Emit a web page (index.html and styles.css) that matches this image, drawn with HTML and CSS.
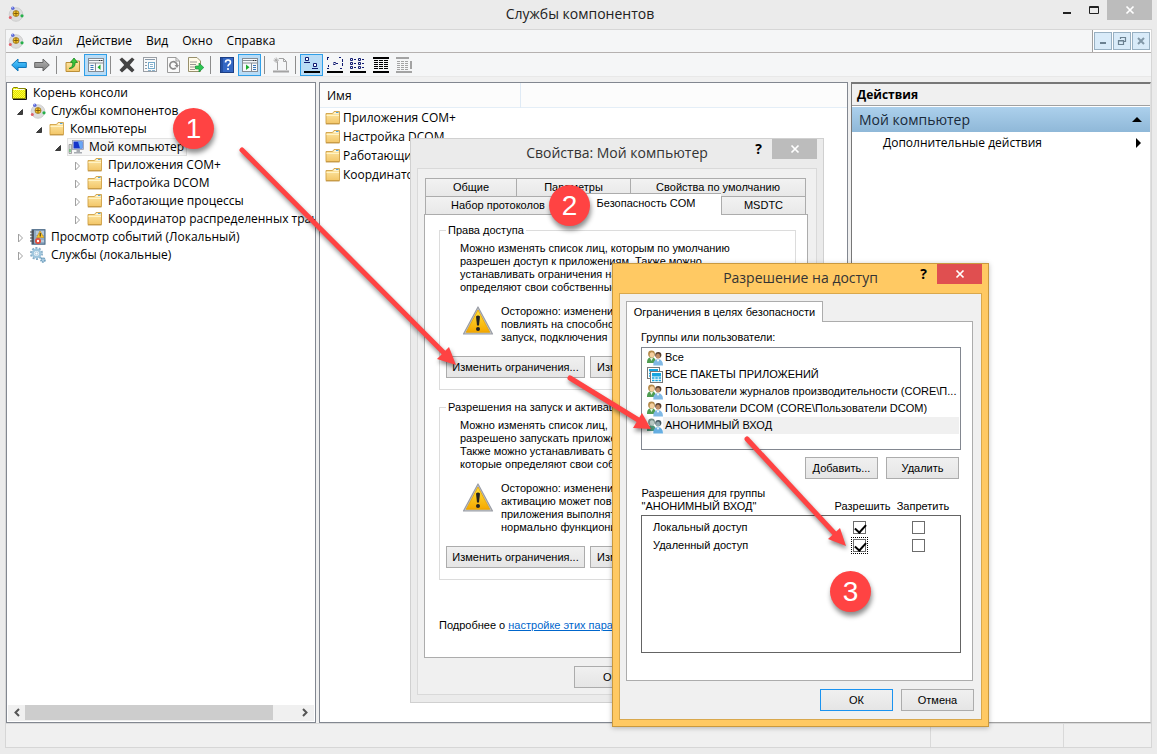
FILE: index.html
```html
<!DOCTYPE html>
<html lang="ru">
<head>
<meta charset="utf-8">
<title>Службы компонентов</title>
<link rel="stylesheet" href="styles.css">
</head>
<body>
<svg class="sprite" aria-hidden="true">
  <defs>
    <linearGradient id="gFolder" x1="0" y1="0" x2="0" y2="1"><stop offset="0" stop-color="#fde9a9"/><stop offset="1" stop-color="#f3c668"/></linearGradient>
    <linearGradient id="gWarn" x1="0" y1="0" x2="0" y2="1"><stop offset="0" stop-color="#ffe23c"/><stop offset="1" stop-color="#f5a800"/></linearGradient>
    <linearGradient id="gBlue" x1="0" y1="0" x2="0" y2="1"><stop offset="0" stop-color="#5fd0ff"/><stop offset="1" stop-color="#0a8be0"/></linearGradient>
    <linearGradient id="gGray" x1="0" y1="0" x2="0" y2="1"><stop offset="0" stop-color="#b5b5b5"/><stop offset="1" stop-color="#7c7c7c"/></linearGradient>
    <pattern id="dither" width="2" height="2" patternUnits="userSpaceOnUse"><rect width="2" height="2" fill="#ffff38"/><rect width="1" height="1" fill="#e2e200"/><rect x="1" y="1" width="1" height="1" fill="#e2e200"/></pattern>
  </defs>
  <symbol id="com" viewBox="0 0 16 16">
    <circle cx="8" cy="8.5" r="6.8" fill="#dcdcdc" stroke="#c8c8c8" stroke-width=".8"/>
    <circle cx="8" cy="7.500" r="3" fill="#f6c62c" stroke="#8a6410" stroke-width=".7"/>
    <path d="M8 5V10M5.500 7.500H10.500" stroke="#6e4a00" stroke-width=".8"/>
    <circle cx="4.800" cy="2.200" r="1.700" fill="#5a68d8"/><circle cx="4.400" cy="1.700" r=".6" fill="#b7c0ff"/>
    <circle cx="14" cy="9.800" r="1.600" fill="#24b04a"/><circle cx="2.300" cy="11.600" r="1.500" fill="#e2606a"/>
  </symbol>
  <symbol id="root" viewBox="0 0 16 16">
    <path d="M.5 13.500V3.500L1.500 2.500H5.500L6.500 3.500H13.500V13.500Z" fill="url(#dither)" stroke="#85850a"/>
    <path d="M14.500 4V14.500H1" fill="none" stroke="#111"/><path d="M1.500 4.500H12.500" stroke="#fffff0"/>
  </symbol>
  <symbol id="folder" viewBox="0 0 16 16">
    <path d="M1 13.500V3.500H7.500L9 1.500H14.500V13.500Z" fill="url(#gFolder)" stroke="#d0a044" stroke-width=".9"/>
    <path d="M9.500 2.500H13.500V3.500H9Z" fill="#fff"/><path d="M11 2.500H13.500" stroke="#58a5d5"/>
    <path d="M1.500 5.500H14" stroke="#fff3c6"/><path d="M.8 14H14.500" stroke="#b98a38" stroke-width=".8"/>
  </symbol>
  <symbol id="pc" viewBox="0 0 16 16">
    <path d="M1 5.500H3.500V14.500H1Z" fill="#d7dcdc" stroke="#888" stroke-width=".7"/><path d="M2 10V13" stroke="#3bbc4b"/>
    <rect x="4.500" y="1.500" width="11" height="9" fill="#dfe3ea" stroke="#8a90a0" stroke-width=".7"/>
    <rect x="5.500" y="2.500" width="9" height="7" fill="#1634c9"/><path d="M10 2.500H14.500V9.500H12Z" fill="#68a8f4"/>
    <path d="M8.500 11H12V13H14V14.500H6V13H8.500Z" fill="#a8acb2"/>
  </symbol>
  <symbol id="events" viewBox="0 0 16 16">
    <rect x="2" y=".7" width="13" height="14.500" fill="#8fabc4" stroke="#41617f"/><path d="M3 1V15" stroke="#505a68" stroke-width="2"/>
    <path d="M0 3H3M0 6H3M0 9H3M0 12H3" stroke="#444"/><path d="M6 3H14M6 5H14M6 8H14M6 12H14" stroke="#f2f7fb" stroke-width=".8"/>
    <path d="M10 2L14 8.500H6.500Z" fill="#ffc928" stroke="#b57a00" stroke-width=".5"/><path d="M10.200 4V7.500" stroke="#222"/>
    <circle cx="8" cy="12" r="3" fill="#e24c3a"/><circle cx="8" cy="12" r="1.200" fill="#fff"/>
  </symbol>
  <symbol id="gears" viewBox="0 0 16 16">
    <circle cx="6.500" cy="6.500" r="5.500" fill="none" stroke="#86adc8" stroke-width="2" stroke-dasharray="2 1.450"/>
    <circle cx="6.500" cy="6.500" r="3.800" fill="#eef7fc" stroke="#9fc6dd" stroke-width="2.400"/><circle cx="6.500" cy="6.500" r="1.500" fill="#fff" stroke="#86adc8" stroke-width=".6"/>
    <circle cx="13" cy="13" r="2" fill="#a9cce2" stroke="#6e9dbc" stroke-width="1.600" stroke-dasharray="1.500 .7"/>
  </symbol>
  <symbol id="open" viewBox="0 0 16 16"><path d="M10.500 6.500V11.500H5.500Z" fill="#404040" stroke="#222" stroke-width=".8"/></symbol>
  <symbol id="shut" viewBox="0 0 16 16"><path d="M6.500 5L10.500 9L6.500 13Z" fill="#fff" stroke="#a0a0a0"/></symbol>
  <symbol id="x" viewBox="0 0 10 10"><path d="M1.500 1.500L8.500 8.500M8.500 1.500L1.500 8.500" stroke="#fff" stroke-width="1.700"/></symbol>
  <symbol id="warn" viewBox="0 0 32 32">
    <path d="M16 2L30.500 29H1.500Z" fill="#c3c6cb" stroke="#9a9da5" stroke-width="1.200" stroke-linejoin="round"/>
    <path d="M16 5L27.800 27.300H4.200Z" fill="url(#gWarn)" stroke="#e9a400" stroke-width=".8"/>
    <path d="M14 11.500Q16 9.500 18 11.500L17 20.500H15Z" fill="#222"/><circle cx="16" cy="24" r="2" fill="#222"/>
  </symbol>
  <symbol id="users" viewBox="0 0 16 16">
    <path d="M0 13Q-.2 7.500 4.500 7Q9 7.500 9 13Z" fill="#4f9d52"/><path d="M3 8L4.500 11L6 8Z" fill="#e8f3e2"/>
    <circle cx="4.500" cy="4" r="3.400" fill="#b58a4a"/><ellipse cx="4.900" cy="5" rx="2.200" ry="2.800" fill="#f4cf9f"/>
    <circle cx="11.300" cy="5" r="3.100" fill="#563d2c"/><ellipse cx="11" cy="6.200" rx="2.100" ry="2.600" fill="#c08c66"/>
    <path d="M6.300 15.500Q6 9.500 11 9Q16 9.500 16 15.500Z" fill="#80b9e5"/><path d="M9.500 9.500L11 12L12.500 9.500Z" fill="#fff"/>
  </symbol>
  <symbol id="anon" viewBox="0 0 16 16">
    <path d="M0 13Q-.2 7.500 4.500 7Q9 7.500 9 13Z" fill="#4f9a7c"/>
    <circle cx="4.500" cy="4" r="3.400" fill="#718b85"/><ellipse cx="4.900" cy="5" rx="2.200" ry="2.800" fill="#bacac5"/>
    <circle cx="11.300" cy="5" r="3.100" fill="#475a62"/><ellipse cx="11" cy="6.200" rx="2.100" ry="2.600" fill="#8fa7ad"/>
    <path d="M6.300 15.500Q6 9.500 11 9Q16 9.500 16 15.500Z" fill="#65aee2"/><path d="M9.500 9.500L11 12L12.500 9.500Z" fill="#e8f5ff"/>
  </symbol>
  <symbol id="packs" viewBox="0 0 16 16">
    <rect x=".5" y=".5" width="12" height="11" fill="#fff" stroke="#777"/><rect x="2" y="2" width="9" height="2.500" fill="#18a5df"/><path d="M2 6.500H4M2 9H4" stroke="#18a5df" stroke-width="1.500"/>
    <rect x="3.500" y="4.500" width="12" height="11" fill="#fff" stroke="#777"/><rect x="5" y="6" width="9" height="3.500" fill="#18a5df"/><path d="M5 11H14M5 13.500H14" stroke="#18a5df" stroke-width="1.500" stroke-dasharray="2.500 .8"/>
  </symbol>
</svg>

<header class="titlebar">
  <svg class="ico"><use href="#com"/></svg>
  <h1>Службы компонентов</h1>
  <div class="winbtns">
    <button aria-label="Свернуть"><svg width="10" height="10"><path d="M1 8H9" stroke="#222" stroke-width="2"/></svg></button>
    <button aria-label="Развернуть"><svg width="10" height="10"><path d="M.5 1.500H9.500V8.500H.5ZM0 2.500H10" fill="none" stroke="#222"/></svg></button>
    <button class="close" aria-label="Закрыть"><svg width="10" height="10"><use href="#x"/></svg></button>
  </div>
</header>

<div class="client">
  <nav class="menubar">
    <svg class="ico"><use href="#com"/></svg>
    <button>Файл</button><button>Действие</button><button>Вид</button><button>Окно</button><button>Справка</button>
    <div class="mdi">
      <button aria-label="Свернуть окно"><svg width="10" height="10"><path d="M2 7H8" stroke="#6b8191" stroke-width="2"/></svg></button>
      <button aria-label="Восстановить окно"><svg width="10" height="10"><path d="M3.500 3V1.500H8.500V5.500H7M3 1.500H9M1.500 4.500H6.500V8.500H1.500ZM1 5H7" fill="none" stroke="#6b8191" stroke-width="1.200"/></svg></button>
      <button aria-label="Закрыть окно"><svg width="10" height="10"><path d="M2 2L8 8M8 2L2 8" stroke="#8298a8" stroke-width="2"/></svg></button>
    </div>
  </nav>

  <div class="toolbar">
    <button aria-label="Назад"><svg class="ico" viewBox="0 0 16 16"><path d="M.7 8L7 2V5.500H15.300V10.500H7V14Z" fill="url(#gBlue)" stroke="#1277b8"/></svg></button>
    <button aria-label="Вперед"><svg class="ico" viewBox="0 0 16 16"><path d="M15.300 8L9 2V5.500H.7V10.500H9V14Z" fill="url(#gGray)" stroke="#666"/></svg></button>
    <i class="sep"></i>
    <button aria-label="Вверх"><svg class="ico" viewBox="0 0 16 16"><path d="M1 14.500V5.500H5L6.500 4H14.500V14.500Z" fill="url(#gFolder)" stroke="#bc9038"/><path d="M4 11.500Q8 10.500 7.800 5.500H5.500L9 1L12.500 5.500H10.200Q10.200 11.500 4 11.500Z" fill="#3cc63c" stroke="#16851d" stroke-width=".8"/></svg></button>
    <button class="on" aria-label="Дерево консоли"><svg class="ico" viewBox="0 0 16 16"><rect x=".5" y="1.500" width="15" height="13" fill="#f6f8fa" stroke="#858c94"/><path d="M1 3.500H15M1 6H15M7.500 6V14" stroke="#858c94"/><path d="M11 3.500H15" stroke="#333" stroke-dasharray="1 1"/><path d="M2.500 8.500H5.500M2.500 10.500H5.500M2.500 12.500H5.500" stroke="#3775b8"/><path d="M12.500 7.500V13L9.500 10.200Z" fill="#19ac2b"/></svg></button>
    <i class="sep"></i>
    <button aria-label="Удалить"><svg class="ico" viewBox="0 0 16 16"><path d="M.5 2.500L3 .5L8 5L13 .5L15.500 2.500L10.800 8L15.500 13L13 15.500L8 11L3 15.500L.5 13L5.200 8Z" fill="#444"/></svg></button>
    <button aria-label="Свойства"><svg class="ico" viewBox="0 0 16 16"><rect x="1.500" y=".5" width="13" height="14" fill="#fafafa" stroke="#9a9fa5"/><path d="M3 2.500H13M3 5.500H5M3 8.500H5M3 11.500H5" stroke="#8798a8"/><rect x="6.500" y="5.500" width="6" height="6" fill="#fff" stroke="#74aacb"/><path d="M8 7.500H11M8 9.500H11M6 13.500H9M10 13.500H13" stroke="#8cb2cc"/></svg></button>
    <button aria-label="Обновить"><svg class="ico" viewBox="0 0 16 16"><path d="M2.500 .5H11L14.500 4V15.500H2.500Z" fill="#fafafa" stroke="#9b9b9b"/><path d="M11 .5V4H14" fill="none" stroke="#9b9b9b"/><path d="M10.800 11A3.600 3.600 0 1 1 12 8.500" fill="none" stroke="#8b8b8b" stroke-width="1.700"/><path d="M9.500 8H14L12 11Z" fill="#8b8b8b"/></svg></button>
    <button aria-label="Экспорт"><svg class="ico" viewBox="0 0 16 16"><path d="M.5 .5H9L12.500 4V14.500H.5Z" fill="#fffbe8" stroke="#98906c"/><path d="M2 5H9M2 7.500H8M2 10H8M2 12.500H7" stroke="#7c7c7c" stroke-width=".8"/><path d="M7.500 9H11V6L15.800 10.500L11 15V12H7.500Z" fill="#2dc653" stroke="#16903a" stroke-width=".7"/></svg></button>
    <i class="sep"></i>
    <button aria-label="Справка"><svg class="ico" viewBox="0 0 16 16"><rect x="1.500" y=".5" width="13" height="15" fill="#3467c4" stroke="#1d3f85"/><path d="M3 1V15" stroke="#163a83"/><path d="M6.500 5.500Q6.500 3 9 3Q11.500 3 11.500 5.300Q11.500 6.700 10 7.500Q9 8.200 9 9.500" fill="none" stroke="#fff" stroke-width="1.600"/><circle cx="9" cy="12" r="1.100" fill="#fff"/></svg></button>
    <button class="on" aria-label="Панель действий"><svg class="ico" viewBox="0 0 16 16"><rect x=".5" y="1.500" width="15" height="13" fill="#f6f8fa" stroke="#858c94"/><path d="M1 3.500H15M1 6H15M9.500 6V14" stroke="#858c94"/><path d="M11 3.500H15" stroke="#333" stroke-dasharray="1 1"/><path d="M11 8.500H14M11 10.500H14M11 12.500H14" stroke="#3775b8"/><path d="M4 7.500V13L7.500 10.200Z" fill="#19ac2b"/></svg></button>
    <i class="sep"></i>
    <button aria-label="Новый объект"><svg class="ico" viewBox="0 0 16 16"><path d="M4.500 13V5M6 1.500H10.500L13.500 4.500V13M10.500 1.500V4.500H13" fill="none" stroke="#a3a3a3"/><path d="M0 14.500H16" stroke="#a3a3a3" stroke-width="2"/><path d="M1.500 1.500L5 5M5 1.500L1.500 5M.5 3.200H6M3.200 .5V6" stroke="#a3a3a3" stroke-width=".8"/></svg></button>
    <i class="sep"></i>
    <button class="on" aria-label="Крупные значки"><svg class="ico" viewBox="0 0 16 16"><path d="M1.500 .5H4.500V3.500H1.500ZM9.500 6.500H12.500V9.500H9.500Z" fill="#fff" stroke="#101a70"/><path d="M0 5.500H6M8 11.500H14" stroke="#101a70"/><path d="M0 15H16" stroke="#000" stroke-width="2"/></svg></button>
    <button aria-label="Мелкие значки"><svg class="ico" viewBox="0 0 16 16"><path d="M0 .5H3M12 .5H15M0 11.500H3M13 11.500H16M9 6.500H12" stroke="#101a70" stroke-dasharray="2 1"/><path d="M.5 1V3M15.500 2V10M1.500 8V10M6.500 5.500H8.500V7.500H6.500Z" fill="none" stroke="#101a70" stroke-dasharray="3 1"/><path d="M0 15H16" stroke="#000" stroke-width="2"/></svg></button>
    <button aria-label="Список"><svg class="ico" viewBox="0 0 16 16"><path d="M.5 1.500H2.500V3.500H.5ZM.5 5.500H2.500V7.500H.5ZM.5 9.500H2.500V11.500H.5ZM8.500 1.500H10.500V3.500H8.500ZM8.500 5.500H10.500V7.500H8.500ZM8.500 9.500H10.500V11.500H8.500Z" fill="none" stroke="#101a70"/><path d="M4 2.500H7M4 6.500H7M4 10.500H7M12 2.500H15M12 6.500H15M12 10.500H15" stroke="#101a70" stroke-dasharray="2 1"/><path d="M0 15H16" stroke="#000" stroke-width="2"/></svg></button>
    <button aria-label="Таблица"><svg class="ico" viewBox="0 0 16 16"><path d="M0 1H16M0 15H16" stroke="#000" stroke-width="2"/><path d="M1 3.500H15M1 5.500H15M1 7.500H15M1 9.500H15M1 11.500H15" stroke="#000" stroke-dasharray="4 1"/></svg></button>
    <button aria-label="Настройка"><svg class="ico" viewBox="0 0 16 16"><path d="M0 1H13M0 15H16" stroke="#a3a3a3" stroke-width="2"/><path d="M1 4.500H13M1 6.500H13M1 8.500H13M1 10.500H13M1 12.500H13" stroke="#a3a3a3" stroke-dasharray="3 1"/><path d="M15 4V12" stroke="#a3a3a3" stroke-width="2"/></svg></button>
  </div>

  <main class="panes">
    <section class="pane tree">
      <div class="treebody">
        <div class="row"><svg class="ico"><use href="#root"/></svg><span>Корень консоли</span></div>
        <ul>
          <li><div class="row"><svg class="exp"><use href="#open"/></svg><svg class="ico"><use href="#com"/></svg><span>Службы компонентов</span></div>
            <ul class="sub">
              <li><div class="row"><svg class="exp"><use href="#open"/></svg><svg class="ico"><use href="#folder"/></svg><span>Компьютеры</span></div>
                <ul class="sub">
                  <li><div class="row"><svg class="exp"><use href="#open"/></svg><div class="sel"><svg class="ico"><use href="#pc"/></svg><span>Мой компьютер</span></div></div>
                    <ul class="sub">
                      <li class="row"><svg class="exp"><use href="#shut"/></svg><svg class="ico"><use href="#folder"/></svg><span>Приложения COM+</span></li>
                      <li class="row"><svg class="exp"><use href="#shut"/></svg><svg class="ico"><use href="#folder"/></svg><span>Настройка DCOM</span></li>
                      <li class="row"><svg class="exp"><use href="#shut"/></svg><svg class="ico"><use href="#folder"/></svg><span>Работающие процессы</span></li>
                      <li class="row"><svg class="exp"><use href="#shut"/></svg><svg class="ico"><use href="#folder"/></svg><span>Координатор распределенных транзакций</span></li>
                    </ul>
                  </li>
                </ul>
              </li>
            </ul>
          </li>
          <li class="row"><svg class="exp"><use href="#shut"/></svg><svg class="ico"><use href="#events"/></svg><span>Просмотр событий (Локальный)</span></li>
          <li class="row"><svg class="exp"><use href="#shut"/></svg><svg class="ico"><use href="#gears"/></svg><span>Службы (локальные)</span></li>
        </ul>
      </div>
      <div class="hscroll">
        <svg width="17" height="15"><path d="M11 4L7.500 7.500L11 11" fill="none" stroke="#555" stroke-width="2"/></svg>
        <div class="track"><div class="thumb"></div></div>
        <svg width="17" height="15"><path d="M6 4L9.500 7.500L6 11" fill="none" stroke="#555" stroke-width="2"/></svg>
      </div>
    </section>

    <section class="pane list">
      <div class="listhead"><span>Имя</span></div>
      <ul>
        <li><svg class="ico"><use href="#folder"/></svg>Приложения COM+</li>
        <li><svg class="ico"><use href="#folder"/></svg>Настройка DCOM</li>
        <li><svg class="ico"><use href="#folder"/></svg>Работающие процессы</li>
        <li><svg class="ico"><use href="#folder"/></svg>Координатор</li>
      </ul>
    </section>

    <aside class="pane actions">
      <h2>Действия</h2>
      <div class="acthead"><span>Мой компьютер</span><svg width="10" height="5"><path d="M0 5L5 0L10 5Z"/></svg></div>
      <button class="action"><span>Дополнительные действия</span><svg width="6" height="10"><path d="M0 0L5 5L0 10Z"/></svg></button>
    </aside>
  </main>
  <footer class="status"><span></span><span></span><span></span></footer>
</div>

<section class="dialog props">
  <div class="dlgtitle">
    <h2>Свойства: Мой компьютер</h2>
    <div class="dlgbtns"><b>?</b><button class="close" aria-label="Закрыть"><svg width="10" height="10"><use href="#x"/></svg></button></div>
  </div>
  <div class="frame">
    <div class="tabs top"><button>Общие</button><button>Параметры</button><button>Свойства по умолчанию</button></div>
    <div class="tabs bottom"><button>Набор протоколов</button><button class="active">Безопасность COM</button><button>MSDTC</button></div>
    <div class="page">
      <fieldset>
        <legend>Права доступа</legend>
        <p>Можно изменять список лиц, которым по умолчанию<br>разрешен доступ к приложениям. Также можно<br>устанавливать ограничения на<br>определяют свои собственные</p>
        <div class="caution"><svg><use href="#warn"/></svg><p>Осторожно: изменение<br>повлиять на способность<br>запуск, подключения</p></div>
        <div class="btns"><button class="btn wide">Изменить ограничения...</button><button class="btn wide">Изменить</button></div>
      </fieldset>
      <fieldset>
        <legend>Разрешения на запуск и активацию</legend>
        <p>Можно изменять список лиц,<br>разрешено запускать приложения.<br>Также можно устанавливать о<br>которые определяют свои соб</p>
        <div class="caution"><svg><use href="#warn"/></svg><p>Осторожно: изменение<br>активацию может пов<br>приложения выполнят<br>нормально функциони</p></div>
        <div class="btns"><button class="btn wide">Изменить ограничения...</button><button class="btn wide">Изменить</button></div>
      </fieldset>
      <p class="more">Подробнее о <a href="#">настройке этих параметров</a></p>
    </div>
    <div class="foot"><button class="btn">ОК</button></div>
  </div>
</section>

<section class="dialog access">
  <div class="dlgtitle">
    <h2>Разрешение на доступ</h2>
    <div class="dlgbtns"><b>?</b><button class="close" aria-label="Закрыть"><svg width="10" height="10"><use href="#x"/></svg></button></div>
  </div>
  <div class="frame">
    <button class="onetab">Ограничения в целях безопасности</button>
    <div class="page">
      <p>Группы или пользователи:</p>
      <ul class="users">
        <li><svg class="ico"><use href="#users"/></svg><span>Все</span></li>
        <li><svg class="ico"><use href="#packs"/></svg><span>ВСЕ ПАКЕТЫ ПРИЛОЖЕНИЙ</span></li>
        <li><svg class="ico"><use href="#users"/></svg><span>Пользователи журналов производительности (CORE\П...</span></li>
        <li><svg class="ico"><use href="#users"/></svg><span>Пользователи DCOM (CORE\Пользователи DCOM)</span></li>
        <li class="current"><svg class="ico"><use href="#anon"/></svg><span>АНОНИМНЫЙ ВХОД</span></li>
      </ul>
      <div class="btns"><button class="btn">Добавить...</button><button class="btn">Удалить</button></div>
      <table>
        <thead><tr><th>Разрешения для группы<br>"АНОНИМНЫЙ ВХОД"</th><th>Разрешить</th><th>Запретить</th></tr></thead>
        <tbody>
          <tr><td>Локальный доступ</td><td><input type="checkbox" checked aria-label="Локальный доступ: разрешить"></td><td><input type="checkbox" aria-label="Локальный доступ: запретить"></td></tr>
          <tr><td>Удаленный доступ</td><td><input class="focus" type="checkbox" checked aria-label="Удаленный доступ: разрешить"></td><td><input type="checkbox" aria-label="Удаленный доступ: запретить"></td></tr>
          <tr class="rest"><td colspan="3"></td></tr>
        </tbody>
      </table>
    </div>
    <div class="foot"><button class="btn default">ОК</button><button class="btn">Отмена</button></div>
  </div>
</section>

<svg class="arrows" width="1157" height="754" aria-hidden="true">
  <g fill="#ff4343" stroke="#ff4343">
    <path d="M242 150L446 355" stroke-width="5" stroke-linecap="round"/><path d="M456 365L437 359L449 347Z" stroke="none"/>
    <path d="M570 378L640 421" stroke-width="5" stroke-linecap="round"/><path d="M651 429L633 428L642 413Z" stroke="none"/>
    <path d="M747 439L836 535" stroke-width="5" stroke-linecap="round"/><path d="M846 546L828 539L840 528Z" stroke="none"/>
  </g>
</svg>
<span class="badge one">1</span>
<span class="badge two">2</span>
<span class="badge three">3</span>
</body>
</html>
```

FILE: styles.css
```css
* { box-sizing: border-box; }
body {
  margin: 0;
  position: relative;
  height: 100vh;
  min-height: 754px;
  display: flex;
  flex-direction: column;
  overflow: hidden;
  background: #ebebeb;
  color: #000;
  font: 12px/18px "Open Sans", "Noto Sans", sans-serif;
}
h1, h2, p, ul { margin: 0; padding: 0; font-weight: normal; }
ul { list-style: none; }
button { font: inherit; color: inherit; margin: 0; padding: 0; border: 0; background: none; }
svg { display: block; flex: none; }
.sprite { position: absolute; width: 0; height: 0; }
.ico, .exp { width: 16px; height: 16px; }

.titlebar {
  display: grid;
  grid-template-columns: 1fr auto 1fr;
  height: 29px;
  padding: 0 5px 0 8px;
}
.titlebar .ico { margin-top: 6px; }
.titlebar h1 { font-size: 14px; line-height: 28px; color: #222; }
.winbtns { display: flex; justify-content: flex-end; }
.winbtns button { width: 27px; height: 20px; display: flex; justify-content: center; align-items: center; }
.close { width: 45px; height: 20px; display: flex; justify-content: center; align-items: center; background: #bcbcbc; }
.winbtns .close { width: 45px; }

.client {
  flex: 1;
  display: flex;
  flex-direction: column;
  margin: 0 5px 6px;
  border: 1px solid #d6d6d6;
  background: #f0f0f0;
}
.menubar {
  display: flex;
  align-items: center;
  gap: 14px;
  height: 23px;
  padding-left: 2px;
  background: #f5f6f7;
  border-bottom: 1px solid #b5b1b0;
}
.menubar > .ico { margin-right: -6px; }
.mdi {
  margin-left: auto;
  display: flex;
  align-items: center;
  gap: 1px;
  height: 22px;
  padding: 0 1px;
  border-left: 1px solid #a0a0a0;
  background: #fff;
}
.mdi button {
  width: 18px;
  height: 18px;
  display: flex;
  justify-content: center;
  align-items: center;
  border: 1px solid #98b0c2;
  background: #d9ebf9;
}
.toolbar {
  display: flex;
  align-items: center;
  height: 24px;
  padding-left: 1px;
  background: #f5f6f7;
  border-bottom: 1px solid #e8e8e8;
}
.toolbar button { width: 23px; height: 22px; display: flex; justify-content: center; align-items: center; }
.toolbar .on { border: 1px solid #2f9fe8; background: #b9dcf6; }
.sep { width: 1px; height: 18px; margin: 0 4px 0 3px; background: #8c8c8c; }

.panes { flex: 1; display: flex; gap: 3px; margin-top: 5px; min-height: 0; }
.pane { border: 1px solid #828790; background: #fff; overflow: hidden; }
.tree { width: 310px; display: flex; flex-direction: column; justify-content: space-between; }
.treebody { padding: 1px 0 0 5px; overflow: hidden; }
.sub { padding-left: 19px; }
.row { display: flex; align-items: center; height: 18px; white-space: nowrap; }
.row .ico { margin-right: 5px; }
.row > .exp { margin-right: 2px; }
.sel { display: flex; align-items: center; height: 18px; margin-left: -1px; padding-right: 2px; border: 1px solid #e2e2e2; background: #f7f7f7; }
.hscroll { display: flex; height: 16px; margin: 0 1px 1px; background: #f0f0f0; }
.track { flex: 1; }
.thumb { width: 91%; height: 15px; background: #cdcdcd; }

.list { flex: 1; }
.listhead { height: 25px; padding: 0 7px; line-height: 25px; border-bottom: 1px solid #e4eef7; background: #fcfcfc; }
.listhead span { display: block; width: 194px; border-right: 1px solid #dfeaf5; }
.list ul { padding-left: 5px; }
.list li { display: flex; align-items: center; gap: 2px; height: 19px; white-space: nowrap; }

.actions { width: 300px; border-width: 2px 1px 1px; border-color: #777 #e0e0e0 #a0a0a0 #777; }
.actions h2 { height: 22px; padding-left: 5px; font-size: 12px; font-weight: bold; line-height: 21px; background: #f0f0f0; border-bottom: 1px solid #a0a0a0; }
.acthead { display: flex; align-items: center; justify-content: space-between; height: 25px; margin-top: 1px; padding: 0 8px 0 7px; font-size: 14px; color: #1a2a3a; background: linear-gradient(#acd0ec, #8fb8d8); }
.action { width: 100%; height: 22px; display: flex; align-items: center; justify-content: space-between; padding: 0 8px 0 31px; }

.status { display: flex; height: 24px; border-top: 1px solid #d9d9d9; }
.status span { width: 88px; border-left: 1px solid #d9d9d9; }
.status span:first-child { flex: 1; border: 0; }
.status span:nth-child(2) { width: 133px; }

.dialog { position: absolute; display: flex; flex-direction: column; font: 11px/13px "Liberation Sans", Arial, sans-serif; white-space: nowrap; }
.dlgtitle { display: grid; grid-template-columns: 1fr auto 1fr; height: 29px; font-family: "Open Sans", "Noto Sans", sans-serif; }
.dlgtitle h2 { grid-column: 2; font-size: 14px; line-height: 28px; color: #333; }
.dlgbtns { display: flex; justify-content: flex-end; gap: 10px; line-height: 20px; font-size: 14px; margin-right: 6px; }
.frame { flex: 1; display: flex; flex-direction: column; background: #f0f0f0; border: 1px solid #d9d9d9; }
.page { flex: 1; background: #fff; border: 1px solid #acacac; }
.btn { width: 73px; height: 22px; border: 1px solid #acacac; background: linear-gradient(#f0f0f0, #e5e5e5); }
.btn.wide { width: 139px; }
.btn.wide + .wide { padding-left: 6px; text-align: left; }
.btn.default { border-color: #1a93f0; }
.btns { display: flex; gap: 5px; }
.foot { display: flex; justify-content: flex-end; gap: 8px; padding-top: 8px; }

.props { left: 410px; top: 138px; width: 414px; height: 565px; border: 1px solid #d0d0d0; background: #ebebeb; }
.props .frame { margin: 0 6px 7px; padding: 9px 8px 6px 6px; }
.tabs { display: flex; height: 18px; margin: 0 2px 0 1px; }
.tabs button { height: 19px; border: 1px solid #acacac; border-right-width: 0; background: linear-gradient(#f2f2f2, #e8e8e8); }
.tabs button:last-child { border-right-width: 1px; }
.top button:nth-child(1) { width: 91px; }
.top button:nth-child(2) { width: 114px; }
.top button:nth-child(3) { flex: 1; }
.bottom button:nth-child(1) { flex: 1; }
.bottom button:nth-child(3) { width: 85px; }
.bottom .active { z-index: 1; width: 151px; height: 22px; margin-top: -3px; padding-bottom: 2px; border-bottom: 0; background: #fff; }
.props .page { overflow: hidden; padding: 9px 11px 0 14px; }
fieldset { min-width: 0; margin: 0 0 11px; padding: 5px 6px 11px; border: 1px solid #dcdcdc; }
legend { padding: 0 2px; }
fieldset > p { padding-left: 14px; }
.caution { display: flex; gap: 7px; margin: 11px 0 12px 16px; }
.caution svg { width: 32px; height: 32px; }
.more { padding-top: 28px; }
a { color: #0066cc; text-decoration: underline; }
.props .foot { padding-right: 161px; }

.access { z-index: 2; left: 612px; top: 263px; width: 377px; height: 464px; border: 1px solid #c9993f; background: #ffc963; box-shadow: 0 1px 5px rgba(0, 0, 0, .25); }
.access .close { background: #e04f50; }
.access .frame { margin: 0 6px 6px; padding: 7px 7px 8px 6px; border-color: #d9a84d; }
.onetab { z-index: 1; align-self: flex-start; width: 197px; height: 21px; margin-bottom: -1px; border: 1px solid #acacac; border-bottom: 0; background: #fff; }
.access .page { margin-right: 1px; padding: 9px 11px 0 14px; }
.users { height: 103px; margin: 3px 0 7px; padding: 1px; border: 1px solid #828790; }
.users li { display: flex; align-items: center; gap: 2px; height: 17px; padding-left: 4px; }
.users .current { background: linear-gradient(to right, #fff 20px, #f0f0f0 20px); }
.access .btns { justify-content: flex-end; gap: 8px; padding-right: 2px; }
table { width: 100%; margin-top: 8px; table-layout: fixed; border-collapse: collapse; }
th { padding: 0 0 2px; font-weight: normal; text-align: left; vertical-align: bottom; }
th:nth-child(2), th:nth-child(3) { text-align: center; }
th:nth-child(2) { width: 60px; }
th:nth-child(3) { width: 68px; padding-right: 7px; }
tbody { border: 1px solid #646464; }
td { height: 18px; padding: 0; text-align: center; }
td:first-child { padding-left: 11px; text-align: left; }
td:nth-child(2) { padding-right: 7px; }
td:nth-child(3) { padding-right: 15px; }
tbody tr:first-child td { height: 21px; padding-top: 3px; }
tbody .rest td { height: 98px; }
input {
  appearance: none;
  position: relative;
  display: block;
  width: 13px;
  height: 13px;
  margin: 0 auto;
  border: 1px solid #6c6c6c;
  background: #fff;
}
input:checked::after {
  content: "";
  position: absolute;
  left: 3px;
  top: 0;
  width: 5px;
  height: 9px;
  border: solid #000;
  border-width: 0 2px 2px 0;
  transform: rotate(42deg);
}
.focus { outline: 1px dotted #000; outline-offset: 1px; }

.arrows { position: absolute; z-index: 3; left: 0; top: 0; pointer-events: none; filter: drop-shadow(1px 3px 2px rgba(0, 0, 0, .45)); }
.badge {
  position: absolute;
  z-index: 4;
  width: 41px;
  height: 41px;
  border-radius: 50%;
  background: #ff4343;
  box-shadow: 1px 4px 5px rgba(0, 0, 0, .45);
  color: #fff;
  font: 28px/41px "Liberation Sans", Arial, sans-serif;
  text-align: center;
}
.one { left: 173px; top: 108px; }
.two { left: 549px; top: 185px; }
.three { left: 830px; top: 571px; }
```
